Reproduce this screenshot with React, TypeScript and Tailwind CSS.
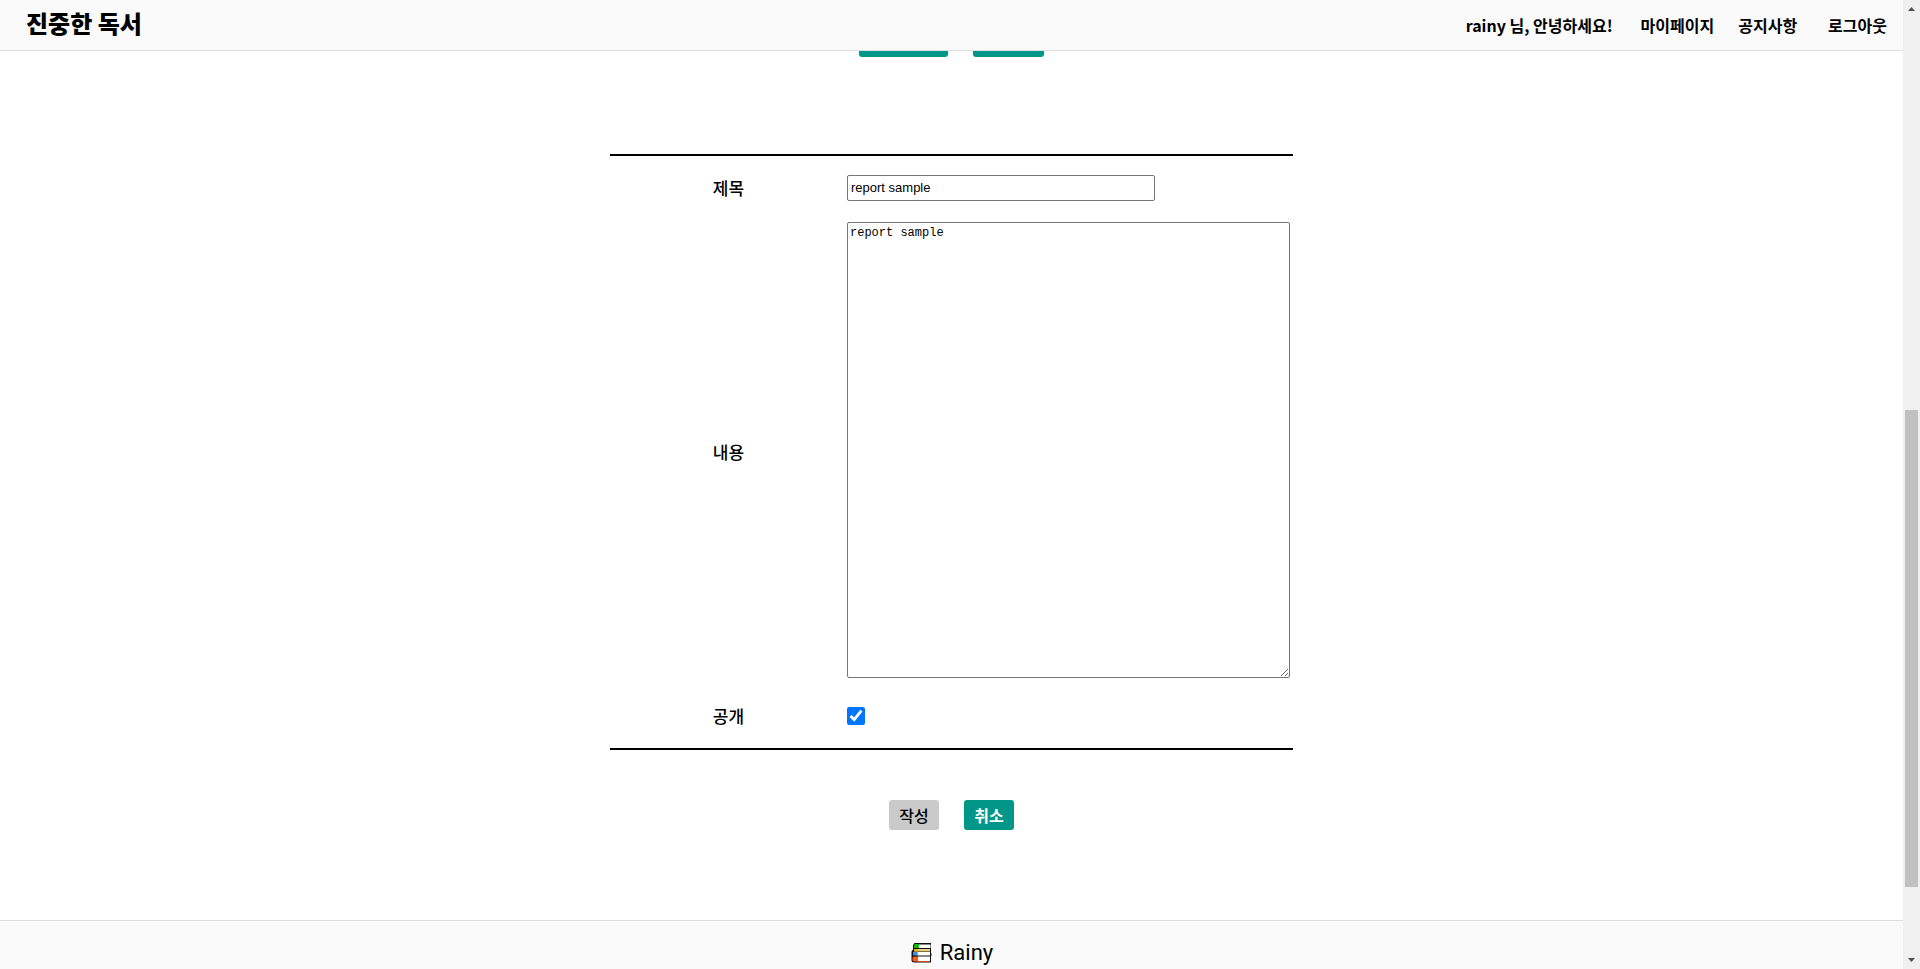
import React, { useState } from "react";

const primaryButton =
  "flex h-[30px] items-center justify-center rounded-[3px] bg-[#009688] text-base font-bold text-white";

function BooksIcon() {
  return (
    <svg width="22" height="22" viewBox="0 0 22 22" aria-hidden="true">
      <path d="M4.500 1H21v1.500h-.5V6h.5v5.500h.5v2.500H21v6.500H4Q1.500 20.500 1.500 18.500V9.500L3 7.500V3z" fill="#111" />
      <path d="M5 2h4v4H4V3z" fill="#14b514" />
      <path d="M9 2.500h11V6H9z" fill="#fff" />
      <path d="M4.500 7H20v2.500H4.500z" fill="#e9cf73" />
      <path d="M4 7h4v2.500H4z" fill="#e0b020" />
      <path d="M3 10h4.500v3.500H3z" fill="#3b8fe0" />
      <path d="M7.500 10H20v3.500H7.500z" fill="#fff" />
      <path d="M3.500 14.500H8v5H4Q2.500 19.500 2.500 18v-2z" fill="#ff5a14" />
      <path d="M8 14.500h12v4.500H8z" fill="#fff" />
      <path d="M8 19h12v.8H8z" fill="#ff5a14" />
    </svg>
  );
}

function Header() {
  return (
    <header className="z-10 flex h-[51px] shrink-0 items-center justify-between border-b border-[#dddddd] bg-[#fafafa] pr-4 pl-[26px]">
      <a href="#home" className="pb-1 text-2xl leading-9 font-black">진중한 독서</a>
      <nav className="flex items-center text-base font-bold">
        <span className="mr-7">rainy 님, 안녕하세요!</span>
        <a href="#mypage" className="mr-6">마이페이지</a>
        <a href="#notice" className="mr-[31px]">공지사항</a>
        <a href="#logout">로그아웃</a>
      </nav>
    </header>
  );
}

function ReportForm() {
  const [title, setTitle] = useState("report sample");
  const [content, setContent] = useState("report sample");
  const [open, setOpen] = useState(true);
  return (
    <form className="mt-[97px] flex w-[683px] flex-col" onSubmit={(e) => e.preventDefault()}>
      <div className="grid grid-cols-[237px_1fr] grid-rows-[64px_464px_64px] items-center border-y-2 border-black">
        <label htmlFor="title" className="text-center text-[17px] font-medium">제목</label>
        <input
          id="title"
          value={title}
          onChange={(e) => setTitle(e.target.value)}
          className="h-[26px] w-[308px] rounded-xs border border-[#767676] bg-white px-[3px] pb-0.5 font-['Liberation_Sans',sans-serif] text-[13px]"
        />
        <label htmlFor="content" className="text-center text-[17px] font-medium">내용</label>
        <textarea
          id="content"
          value={content}
          onChange={(e) => setContent(e.target.value)}
          className="mb-1 h-[456px] w-[443px] resize rounded-xs border border-[#767676] bg-white px-0.5 py-0.5 font-['Liberation_Mono',monospace] text-[12px] leading-4"
        />
        <label htmlFor="open" className="text-center text-[17px] font-medium">공개</label>
        <input
          id="open"
          type="checkbox"
          checked={open}
          onChange={(e) => setOpen(e.target.checked)}
          className="size-[18px] accent-[#0075ff]"
        />
      </div>
      <div className="mt-[50px] flex justify-center gap-[25px]">
        <button type="submit" className="flex h-[30px] w-[50px] items-center justify-center rounded-[3px] bg-[#cacaca] text-base font-medium">작성</button>
        <button type="button" className={primaryButton + " w-[50px]"}>취소</button>
      </div>
    </form>
  );
}

function Scrollbar() {
  return (
    <div aria-hidden="true" className="flex w-[17px] shrink-0 flex-col items-center justify-between bg-[#f0f0f0] py-[7px]">
      <svg width="7" height="4" viewBox="0 0 7 4"><path d="M0 4L3.500 0L7 4z" fill="#505050" /></svg>
      <div className="flex w-[13px] grow flex-col">
        <div className="grow-[399]" />
        <div className="grow-[477] bg-[#c1c1c1]" />
        <div className="grow-[71]" />
      </div>
      <svg width="7" height="4" viewBox="0 0 7 4"><path d="M0 0L3.500 4L7 0z" fill="#505050" /></svg>
    </div>
  );
}

export default function App() {
  return (
    <div className="flex h-screen overflow-hidden bg-white font-['Noto_Sans_CJK_KR',sans-serif] text-black">
      <div className="flex min-w-0 grow flex-col overflow-hidden">
        <Header />
        <main className="-mt-6 flex shrink-0 flex-col items-center pb-[90px]">
          <div className="flex gap-[25px]">
            <button type="button" className={primaryButton + " w-[89px]"}>수정하기</button>
            <button type="button" className={primaryButton + " w-[71px]"}>글 삭제</button>
          </div>
          <ReportForm />
        </main>
        <footer className="flex grow items-start justify-center gap-2 border-t border-[#dddddd] bg-[#fafafa] pt-[21px]">
          <BooksIcon />
          <span className="font-['Roboto',sans-serif] text-[22px] leading-[22px]">Rainy</span>
        </footer>
      </div>
      <Scrollbar />
    </div>
  );
}
